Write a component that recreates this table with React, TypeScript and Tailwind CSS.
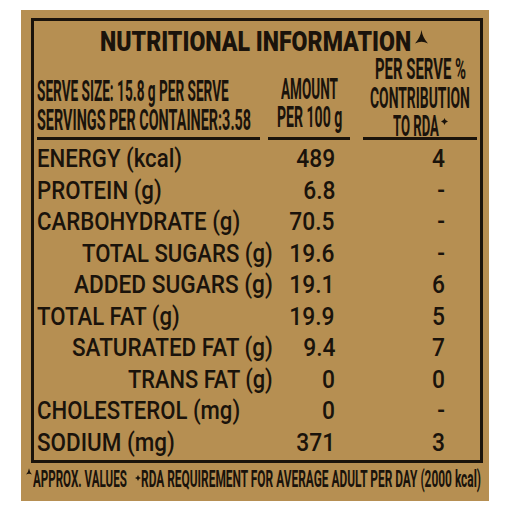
import React, { useLayoutEffect, useRef, useState } from "react";

const F = { fontFamily: 'Roboto, "Liberation Sans", Arial, sans-serif' };

function Fit({ w, children }: { w: number; children: React.ReactNode }) {
  const ref = useRef<HTMLSpanElement>(null);
  const [s, setS] = useState(1);
  useLayoutEffect(() => {
    const measure = () => {
      const el = ref.current;
      if (el && el.offsetWidth) setS(w / el.offsetWidth);
    };
    measure();
    if (document.fonts) document.fonts.ready.then(measure);
  }, [w]);
  return (
    <span className="inline-block shrink-0" style={{ width: w }}>
      <span ref={ref} className="inline-block whitespace-nowrap origin-left" style={{ transform: `scaleX(${s})` }}>
        {children}
      </span>
    </span>
  );
}

const Tent = ({ className }: { className?: string }) => (
  <svg viewBox="0 0 12 13" className={className} fill="currentColor">
    <path d="M6 0 Q7 7 12 12.6 Q6 9.2 0 12.6 Q5 7 6 0 Z" />
  </svg>
);

const Star = ({ className }: { className?: string }) => (
  <svg viewBox="0 0 10 10" className={className} fill="currentColor">
    <path d="M5 0 Q5.8 4.2 10 5 Q5.8 5.8 5 10 Q4.2 5.8 0 5 Q4.2 4.2 5 0 Z" />
  </svg>
);

type Row = { label: string; w: number; sub?: boolean; amt: string; rda: string };
const rows: Row[] = [
  { label: "ENERGY (kcal)", w: 145, amt: "489", rda: "4" },
  { label: "PROTEIN (g)", w: 125, amt: "6.8", rda: "-" },
  { label: "CARBOHYDRATE (g)", w: 203, amt: "70.5", rda: "-" },
  { label: "TOTAL SUGARS (g)", w: 191, sub: true, amt: "19.6", rda: "-" },
  { label: "ADDED SUGARS (g)", w: 199, sub: true, amt: "19.1", rda: "6" },
  { label: "TOTAL FAT (g)", w: 143, amt: "19.9", rda: "5" },
  { label: "SATURATED FAT (g)", w: 201, sub: true, amt: "9.4", rda: "7" },
  { label: "TRANS FAT (g)", w: 145, sub: true, amt: "0", rda: "0" },
  { label: "CHOLESTEROL (mg)", w: 203, amt: "0", rda: "-" },
  { label: "SODIUM (mg)", w: 138, amt: "371", rda: "3" },
];

export default function App() {
  return (
    <div className="w-[511px] h-[511px] bg-white pl-[21px] pt-[10px] overflow-hidden" style={F}>
      <div className="w-[468px] h-[491px] bg-[#b68f52] text-[#1a130b] font-medium pl-[10px] pt-[8px]">
        <div className="w-[452px] h-[445px] border-[3px] border-[#1a130b] flex flex-col">
          {/* title */}
          <div className="h-[35px] flex items-start pt-[7px] pl-[66px]">
            <span className="text-[28px] leading-[28px] font-black">
              <Fit w={311}>NUTRITIONAL INFORMATION</Fit>
            </span>
            <Tent className="w-[13px] h-[14px] ml-[4px] mt-[2px]" />
          </div>
          {/* header */}
          <div className="flex h-[84px] font-bold">
            <div className="w-[223px] ml-[3px] flex flex-col">
              <div className="h-[81px] pt-[20px] flex flex-col text-[30px] leading-[29px]">
                <Fit w={192}>SERVE SIZE: 15.8 g PER SERVE</Fit>
                <Fit w={214}>SERVINGS PER CONTAINER:3.58</Fit>
              </div>
              <div className="h-[3px] bg-[#1a130b]" />
            </div>
            <div className="w-[82px] ml-[8px] flex flex-col">
              <div className="h-[81px] pt-[19px] flex flex-col items-center text-[29px] leading-[28px]">
                <Fit w={57}>AMOUNT</Fit>
                <Fit w={65}>PER 100 g</Fit>
              </div>
              <div className="h-[3px] bg-[#1a130b]" />
            </div>
            <div className="w-[114px] ml-[13px] flex flex-col">
              <div className="h-[81px] -mt-[1px] flex flex-col items-center text-[30px] leading-[28.5px]">
                <Fit w={91}>PER SERVE %</Fit>
                <Fit w={100}>CONTRIBUTION</Fit>
                <div className="flex items-start">
                  <Fit w={46}>TO RDA</Fit>
                  <Star className="w-[7px] h-[7px] ml-[2px] mt-[6px]" />
                </div>
              </div>
              <div className="h-[3px] bg-[#1a130b] mt-[1px]" />
            </div>
          </div>
          {/* rows */}
          <div className="flex flex-col pt-[2px]">
            {rows.map((r) => (
              <div key={r.label} className="flex h-[31.5px] text-[26.5px] leading-[31.5px]">
                <div className={`w-[236px] ml-[3px] flex ${r.sub ? "justify-end" : "justify-start"}`}>
                  <Fit w={r.w}>{r.label}</Fit>
                </div>
                <div className="w-[62px] flex justify-end">
                  <span className="inline-block whitespace-nowrap origin-right scale-x-[0.86]">{r.amt}</span>
                </div>
                <div className="w-[110px] flex justify-end">
                  <span className="inline-block whitespace-nowrap origin-right scale-x-[0.86]">{r.rda}</span>
                </div>
              </div>
            ))}
          </div>
        </div>
        <div className="flex items-start ml-[-5px] mt-[4px] text-[24px] leading-[24px] font-bold">
          <Tent className="w-[6px] h-[7px] mt-[1px]" />
          <span className="ml-[1px]">
            <Fit w={94}>APPROX. VALUES</Fit>
          </span>
          <Star className="w-[6px] h-[6px] ml-[8px] mt-[8px]" />
          <span>
            <Fit w={340}>RDA REQUIREMENT FOR AVERAGE ADULT PER DAY (2000 kcal)</Fit>
          </span>
        </div>
      </div>
    </div>
  );
}
